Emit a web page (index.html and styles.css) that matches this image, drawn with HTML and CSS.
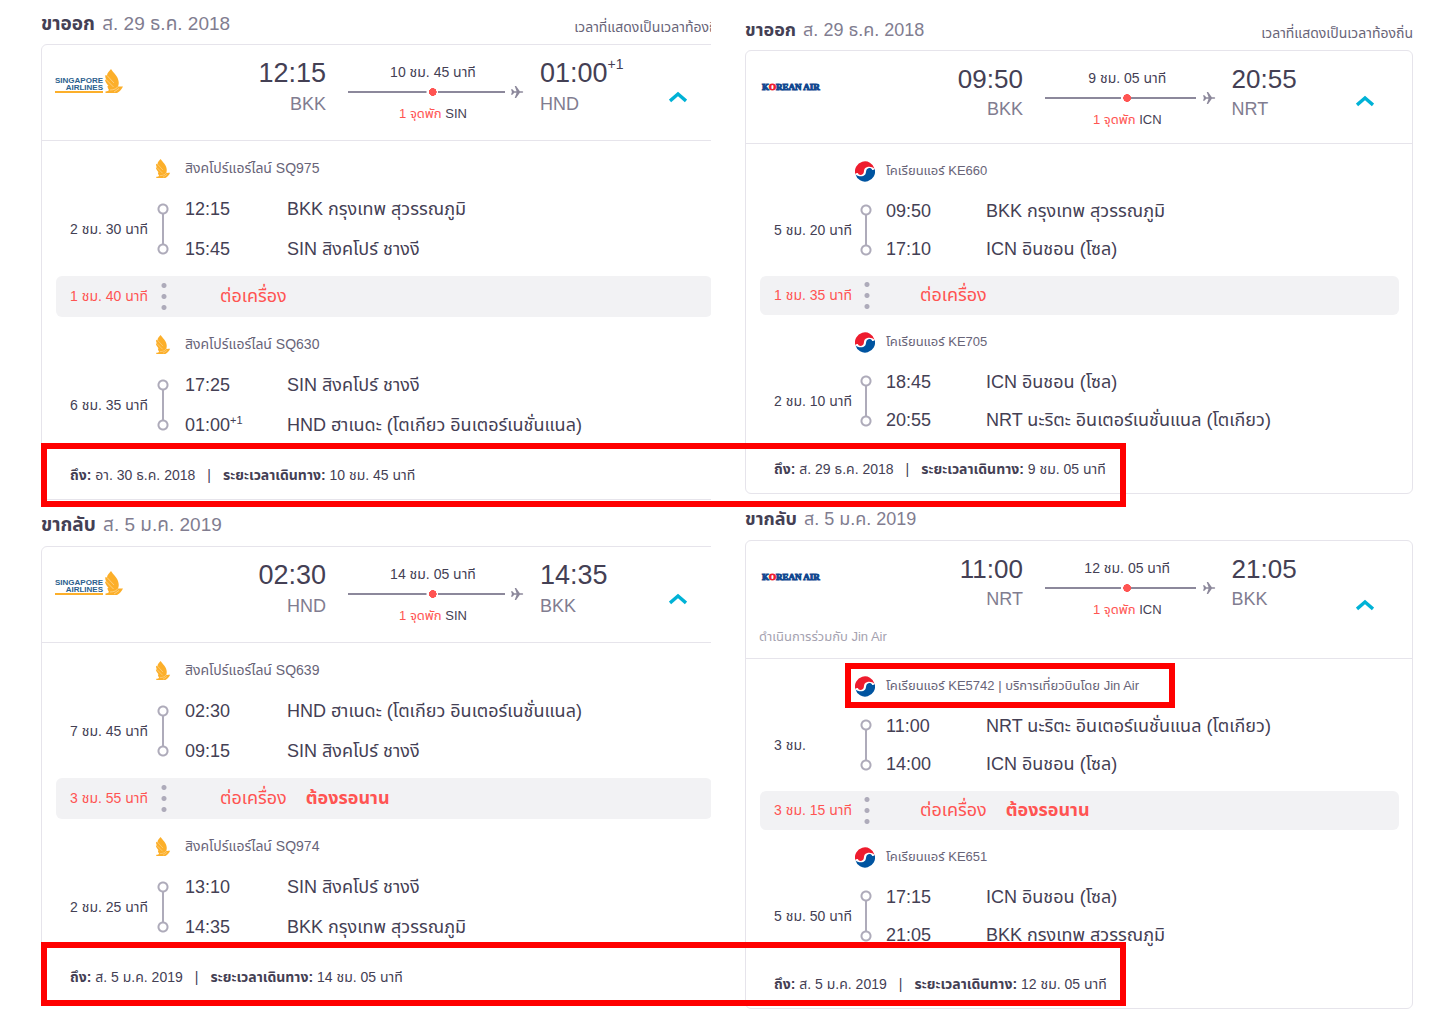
FILE: index.html
```html
<!DOCTYPE html>
<html lang="th">
<head>
    <meta charset="UTF-8">
    <meta name="viewport" content="width=device-width, initial-scale=1.0">
    <title>รายละเอียดเที่ยวบิน</title>
    <link rel="stylesheet" href="styles.css">
</head>
<body>
    <!-- Shared icons -->
    <svg class="sprite" aria-hidden="true">
        <symbol id="bird" viewBox="0 0 18 24">
            <path fill="#fcaf2a" d="M6 0C8 3.500 13 7 13.500 12C14 14 13.700 16 13 17.500C14.500 17.800 16 17.300 18 17.500C16.500 20.500 15 22.500 12 24H.500V22.500C2.500 22.300 3.500 21.800 4 21C3 19.500 2.500 18.500 2.500 17L3.500 17C1.500 14.500 0 12.500 0 10.500L1.500 11C.300 9 0 7.500 .500 6L2 6.500C2 4 4 2.500 6 0Z"/>
            <path fill="none" stroke="#fde3b4" stroke-width=".6" d="M2 6.500L9 14M1.500 11L8.500 18M5 21C9 21 12 19.500 13 17.500M9 23L14 19.500"/>
        </symbol>
        <symbol id="taeguk" viewBox="0 0 20 20">
            <circle cx="10" cy="10" r="10" fill="#fff"/>
            <path fill="#ee1c2e" d="M.300 12.500A10 10 0 0 1 19.600 7.200C17 4.600 12 4.400 9.800 7C8.500 9 9.500 11.500 7.500 12.800C6 14 3.500 13.500 2.800 11.500C1.800 11.300 .800 11.600 .300 12.500Z"/>
            <path fill="#0054a0" transform="rotate(180 10 10)" d="M.300 12.500A10 10 0 0 1 19.600 7.200C17 4.600 12 4.400 9.800 7C8.500 9 9.500 11.500 7.500 12.800C6 14 3.500 13.500 2.800 11.500C1.800 11.300 .800 11.600 .300 12.500Z"/>
        </symbol>
        <symbol id="plane" viewBox="0 0 14 14">
            <path fill="#8c889b" d="M0 4H1.500L3.500 6.300H6L4 .500H5.500L9.500 6.300H12.500Q14 7 12.500 7.700H9.500L5.500 13.500H4L6 7.700H3.500L1.500 10H0L1 7Z"/>
        </symbol>
        <symbol id="chevron" viewBox="0 0 18 12">
            <path fill="none" stroke="#00b2d6" stroke-width="3.400" d="M1 10L9 3L17 10"/>
        </symbol>
    </svg>

    <main class="compare">
        <section class="option option-sq">
            <div class="trip-head">
                <h2>ขาออก <span>ส. 29 ธ.ค. 2018</span></h2>
                <p>เวลาที่แสดงเป็นเวลาท้องถิ่น</p>
            </div>
            <article class="card">
                <div class="summary">
                    <div class="from">
                        <div class="logo"><p><span>SINGAPORE</span><span>AIRLINES</span></p><svg><use href="#bird"/></svg></div>
                        <div class="point"><b>12:15</b><span>BKK</span></div>
                    </div>
                    <div class="path">
                        <p>10 ชม. 45 นาที</p>
                        <div class="line"><i></i><svg><use href="#plane"/></svg></div>
                        <p class="stop"><em>1 จุดพัก</em> SIN</p>
                    </div>
                    <div class="to">
                        <div class="point"><b>01:00<sup>+1</sup></b><span>HND</span></div>
                        <button type="button" class="toggle" aria-label="ซ่อนรายละเอียด"><svg><use href="#chevron"/></svg></button>
                    </div>
                </div>
                <div class="airline"><svg><use href="#bird"/></svg><span>สิงคโปร์แอร์ไลน์ SQ975</span></div>
                <div class="segment">
                    <span class="duration">2 ชม. 30 นาที</span><i class="rail"></i>
                    <span class="time">12:15</span><span>BKK กรุงเทพ สุวรรณภูมิ</span>
                    <span class="time">15:45</span><span>SIN สิงคโปร์ ชางงี</span>
                </div>
                <div class="transfer"><span class="duration">1 ชม. 40 นาที</span><i class="dots"></i><span>ต่อเครื่อง</span></div>
                <div class="airline"><svg><use href="#bird"/></svg><span>สิงคโปร์แอร์ไลน์ SQ630</span></div>
                <div class="segment">
                    <span class="duration">6 ชม. 35 นาที</span><i class="rail"></i>
                    <span class="time">17:25</span><span>SIN สิงคโปร์ ชางงี</span>
                    <span class="time">01:00<sup>+1</sup></span><span>HND ฮาเนดะ (โตเกียว อินเตอร์เนชั่นแนล)</span>
                </div>
                <p class="total"><span><b>ถึง:</b> อา. 30 ธ.ค. 2018</span><span>|</span><span><b>ระยะเวลาเดินทาง:</b> 10 ชม. 45 นาที</span></p>
            </article>

            <div class="trip-head">
                <h2>ขากลับ <span>ส. 5 ม.ค. 2019</span></h2>
            </div>
            <article class="card">
                <div class="summary">
                    <div class="from">
                        <div class="logo"><p><span>SINGAPORE</span><span>AIRLINES</span></p><svg><use href="#bird"/></svg></div>
                        <div class="point"><b>02:30</b><span>HND</span></div>
                    </div>
                    <div class="path">
                        <p>14 ชม. 05 นาที</p>
                        <div class="line"><i></i><svg><use href="#plane"/></svg></div>
                        <p class="stop"><em>1 จุดพัก</em> SIN</p>
                    </div>
                    <div class="to">
                        <div class="point"><b>14:35</b><span>BKK</span></div>
                        <button type="button" class="toggle" aria-label="ซ่อนรายละเอียด"><svg><use href="#chevron"/></svg></button>
                    </div>
                </div>
                <div class="airline"><svg><use href="#bird"/></svg><span>สิงคโปร์แอร์ไลน์ SQ639</span></div>
                <div class="segment">
                    <span class="duration">7 ชม. 45 นาที</span><i class="rail"></i>
                    <span class="time">02:30</span><span>HND ฮาเนดะ (โตเกียว อินเตอร์เนชั่นแนล)</span>
                    <span class="time">09:15</span><span>SIN สิงคโปร์ ชางงี</span>
                </div>
                <div class="transfer"><span class="duration">3 ชม. 55 นาที</span><i class="dots"></i><span>ต่อเครื่อง <b>ต้องรอนาน</b></span></div>
                <div class="airline"><svg><use href="#bird"/></svg><span>สิงคโปร์แอร์ไลน์ SQ974</span></div>
                <div class="segment">
                    <span class="duration">2 ชม. 25 นาที</span><i class="rail"></i>
                    <span class="time">13:10</span><span>SIN สิงคโปร์ ชางงี</span>
                    <span class="time">14:35</span><span>BKK กรุงเทพ สุวรรณภูมิ</span>
                </div>
                <p class="total"><span><b>ถึง:</b> ส. 5 ม.ค. 2019</span><span>|</span><span><b>ระยะเวลาเดินทาง:</b> 14 ชม. 05 นาที</span></p>
            </article>
        </section>

        <section class="option option-ke">
            <div class="trip-head">
                <h2>ขาออก <span>ส. 29 ธ.ค. 2018</span></h2>
                <p>เวลาที่แสดงเป็นเวลาท้องถิ่น</p>
            </div>
            <article class="card">
                <div class="summary">
                    <div class="from">
                        <div class="logo">K<em>O</em>REAN AIR</div>
                        <div class="point"><b>09:50</b><span>BKK</span></div>
                    </div>
                    <div class="path">
                        <p>9 ชม. 05 นาที</p>
                        <div class="line"><i></i><svg><use href="#plane"/></svg></div>
                        <p class="stop"><em>1 จุดพัก</em> ICN</p>
                    </div>
                    <div class="to">
                        <div class="point"><b>20:55</b><span>NRT</span></div>
                        <button type="button" class="toggle" aria-label="ซ่อนรายละเอียด"><svg><use href="#chevron"/></svg></button>
                    </div>
                </div>
                <div class="airline"><svg><use href="#taeguk"/></svg><span>โคเรียนแอร์ KE660</span></div>
                <div class="segment">
                    <span class="duration">5 ชม. 20 นาที</span><i class="rail"></i>
                    <span class="time">09:50</span><span>BKK กรุงเทพ สุวรรณภูมิ</span>
                    <span class="time">17:10</span><span>ICN อินชอน (โซล)</span>
                </div>
                <div class="transfer"><span class="duration">1 ชม. 35 นาที</span><i class="dots"></i><span>ต่อเครื่อง</span></div>
                <div class="airline"><svg><use href="#taeguk"/></svg><span>โคเรียนแอร์ KE705</span></div>
                <div class="segment">
                    <span class="duration">2 ชม. 10 นาที</span><i class="rail"></i>
                    <span class="time">18:45</span><span>ICN อินชอน (โซล)</span>
                    <span class="time">20:55</span><span>NRT นะริตะ อินเตอร์เนชั่นแนล (โตเกียว)</span>
                </div>
                <p class="total"><span><b>ถึง:</b> ส. 29 ธ.ค. 2018</span><span>|</span><span><b>ระยะเวลาเดินทาง:</b> 9 ชม. 05 นาที</span></p>
            </article>

            <div class="trip-head">
                <h2>ขากลับ <span>ส. 5 ม.ค. 2019</span></h2>
            </div>
            <article class="card">
                <div class="summary codeshare">
                    <div class="from">
                        <div class="logo">K<em>O</em>REAN AIR</div>
                        <div class="point"><b>11:00</b><span>NRT</span></div>
                    </div>
                    <div class="path">
                        <p>12 ชม. 05 นาที</p>
                        <div class="line"><i></i><svg><use href="#plane"/></svg></div>
                        <p class="stop"><em>1 จุดพัก</em> ICN</p>
                    </div>
                    <div class="to">
                        <div class="point"><b>21:05</b><span>BKK</span></div>
                        <button type="button" class="toggle" aria-label="ซ่อนรายละเอียด"><svg><use href="#chevron"/></svg></button>
                    </div>
                    <p class="operator">ดำเนินการร่วมกับ Jin Air</p>
                </div>
                <div class="airline marked"><svg><use href="#taeguk"/></svg><span>โคเรียนแอร์ KE5742 | บริการเที่ยวบินโดย Jin Air</span></div>
                <div class="segment">
                    <span class="duration">3 ชม.</span><i class="rail"></i>
                    <span class="time">11:00</span><span>NRT นะริตะ อินเตอร์เนชั่นแนล (โตเกียว)</span>
                    <span class="time">14:00</span><span>ICN อินชอน (โซล)</span>
                </div>
                <div class="transfer"><span class="duration">3 ชม. 15 นาที</span><i class="dots"></i><span>ต่อเครื่อง <b>ต้องรอนาน</b></span></div>
                <div class="airline"><svg><use href="#taeguk"/></svg><span>โคเรียนแอร์ KE651</span></div>
                <div class="segment">
                    <span class="duration">5 ชม. 50 นาที</span><i class="rail"></i>
                    <span class="time">17:15</span><span>ICN อินชอน (โซล)</span>
                    <span class="time">21:05</span><span>BKK กรุงเทพ สุวรรณภูมิ</span>
                </div>
                <p class="total"><span><b>ถึง:</b> ส. 5 ม.ค. 2019</span><span>|</span><span><b>ระยะเวลาเดินทาง:</b> 12 ชม. 05 นาที</span></p>
            </article>
        </section>

        <!-- Highlights across both options -->
        <div class="highlight highlight-out"></div>
        <div class="highlight highlight-back"></div>
    </main>
</body>
</html>
```
FILE: styles.css
```css
* {
    margin: 0;
    padding: 0;
    box-sizing: border-box;
}

body {
    font-family: "Liberation Sans", Arial, "Noto Sans Thai", Loma, sans-serif;
    background: #fff;
    color: #444054;
    overflow-x: hidden;
}

i,
em {
    font-style: normal;
}

.sprite {
    position: absolute;
    width: 0;
    height: 0;
}

.compare {
    position: relative;
    display: grid;
    grid-template-columns: 670fr 668fr;
    column-gap: 34px;
    padding: 0 27px 0 41px;
}

.option {
    min-width: 0;
    white-space: nowrap;
}

/* The two options use slightly different scales */
.option-sq {
    --bleed: 15px;
    --row: 40px;
    --bar: 41px;
    --bar-gap: 7px;
    --col-duration: 85px;
    --col-rail: 30px;
    --col-time: 102px;
    --col-dots: 65px;
    --summary: 95px;
    --toggle-top: 45px;
    --text-head: 19px;
    --text-big: 27px;
    --line-code: 30px;
    overflow: hidden;
}

.option-ke {
    --bleed: 0px;
    --row: 38px;
    --bar: 39px;
    --bar-gap: 8px;
    --col-duration: 84px;
    --col-rail: 28px;
    --col-time: 100px;
    --col-dots: 62px;
    --summary: 92px;
    --toggle-top: 43px;
    --text-head: 18px;
    --text-big: 26px;
    --line-code: 28px;
    padding-top: 6px;
}

.trip-head {
    display: flex;
    justify-content: space-between;
    align-items: center;
    height: 44px;
    margin-right: calc(var(--bleed) * -1);
}

.card + .trip-head {
    height: 46px;
}

.trip-head h2 {
    padding-top: 3px;
    font-size: var(--text-head);
    line-height: 24px;
}

.trip-head h2 span {
    margin-left: 2px;
    color: #817d90;
    font-weight: 400;
}

.trip-head p {
    padding-top: 10px;
    color: #686478;
    font-size: 14px;
}

.card {
    margin-right: calc(var(--bleed) * -1);
    border: 1px solid #e6e4eb;
    border-radius: 6px;
}

.summary {
    display: grid;
    grid-template-columns: 284fr 214fr 185fr;
    grid-template-rows: var(--summary);
    border-bottom: 1px solid #e6e4eb;
    margin-bottom: 6px;
}

.from {
    display: flex;
    justify-content: space-between;
    padding-left: 13px;
}

.option-sq .logo {
    display: flex;
    align-items: flex-end;
    gap: 2px;
    height: 24px;
    margin-top: 24px;
}

.logo p {
    border-bottom: 2px solid #fcaf2a;
    color: #2c5f8e;
    font-size: 8px;
    font-weight: 700;
    line-height: 7px;
    text-align: right;
}

.logo p span {
    display: block;
}

.logo svg {
    width: 18px;
    height: 24px;
}

.option-ke .logo {
    margin: 30px 0 0 3px;
    color: #10478f;
    font-family: "Liberation Serif", "Times New Roman", serif;
    font-size: 9px;
    font-weight: 700;
    line-height: 12px;
    -webkit-text-stroke: 1px;
}

.logo em {
    color: #ee1c2e;
}

.point {
    display: flex;
    flex-direction: column;
    padding-top: 12px;
}

.from .point {
    align-items: flex-end;
}

.point b {
    position: relative;
    font-size: var(--text-big);
    font-weight: 400;
    line-height: 32px;
}

.point sup {
    position: absolute;
    left: 100%;
    top: -9px;
    font-size: 14px;
}

.point span {
    color: #817d90;
    font-size: 18px;
    line-height: var(--line-code);
}

.path {
    margin: 17px 16px 0 22px;
    text-align: center;
    font-size: 14px;
    line-height: 20px;
}

.path p {
    padding-right: 6px;
}

.path .stop {
    font-size: 13px;
    line-height: 24px;
}

.path em {
    color: #ff5452;
}

.line {
    display: flex;
    align-items: center;
    gap: 6px;
    height: 20px;
}

.line i {
    flex: 1;
    height: 8px;
    background:
        radial-gradient(circle 4px at 54% 50%, #ff5452 92%, transparent),
        linear-gradient(#8c889b, #8c889b) left / 50% 2px no-repeat,
        linear-gradient(#8c889b, #8c889b) right / 43% 2px no-repeat;
}

.line svg {
    width: 13px;
    height: 14px;
}

.to {
    display: flex;
    justify-content: space-between;
}

.toggle {
    width: 18px;
    height: 14px;
    margin: var(--toggle-top) 38px 0 0;
    border: 0;
    background: none;
    cursor: pointer;
}

.codeshare .toggle {
    margin-top: 57px;
}

.toggle svg {
    display: block;
    width: 18px;
    height: 12px;
}

.operator {
    grid-column: 1 / -1;
    height: 25px;
    padding-left: 13px;
    color: #a5a2b0;
    font-size: 13px;
    line-height: 8px;
}

.airline {
    position: relative;
    display: grid;
    grid-template-columns: 16px 1fr;
    column-gap: calc(var(--col-rail) - 16px);
    align-items: center;
    height: 42px;
    padding-left: calc(var(--col-duration) + 28px);
    color: #686478;
    font-size: 14px;
}

.option-ke .airline {
    font-size: 13px;
}

.airline svg {
    width: 16px;
    height: 19px;
}

.option-ke .airline svg {
    width: 20px;
    height: 21px;
    margin-left: -3px;
}

.marked::after {
    content: "";
    position: absolute;
    box-sizing: border-box;
    top: -2px;
    left: 99px;
    width: 330px;
    height: 45px;
    border: 6px solid #f00;
}

.segment {
    display: grid;
    grid-template-columns: var(--col-duration) var(--col-rail) var(--col-time) 1fr;
    grid-template-rows: var(--row) var(--row);
    align-items: center;
    padding-left: 28px;
    font-size: 18px;
}

.duration {
    font-size: 14px;
}

.segment .duration,
.rail {
    grid-row: 1 / 3;
}

.segment sup {
    font-size: 11px;
    line-height: 0;
}

/* Two rings joined by a bar */
.rail {
    width: 16px;
    height: 54px;
    background:
        radial-gradient(circle at 8px 7px, transparent 3px, #aeabba 4px, #aeabba 5px, transparent 6px),
        radial-gradient(circle at 8px 47px, transparent 3px, #aeabba 4px, #aeabba 5px, transparent 6px),
        linear-gradient(#aeabba, #aeabba) center / 2px 30px no-repeat;
}

.transfer {
    display: grid;
    grid-template-columns: var(--col-duration) var(--col-dots) 1fr;
    align-items: center;
    height: var(--bar);
    margin: var(--bar-gap) 13px 6px 14px;
    padding-left: 14px;
    border-radius: 6px;
    background: #f2f2f4;
    color: #ff5452;
    font-size: 18px;
}

.transfer b {
    margin-left: 14px;
}

.dots {
    width: 18px;
    height: 33px;
    background: radial-gradient(circle, #aeabba 2px, transparent 3px) center / 18px 11px;
}

.total {
    display: flex;
    align-items: center;
    gap: 12px;
    height: 48px;
    margin-top: 6px;
    padding-left: 28px;
    font-size: 14px;
}

.highlight {
    position: absolute;
    left: 41px;
    width: 1085px;
    height: 64px;
    border: 6px solid #f00;
}

.highlight-out {
    top: 443px;
}

.highlight-back {
    top: 942px;
}
```
